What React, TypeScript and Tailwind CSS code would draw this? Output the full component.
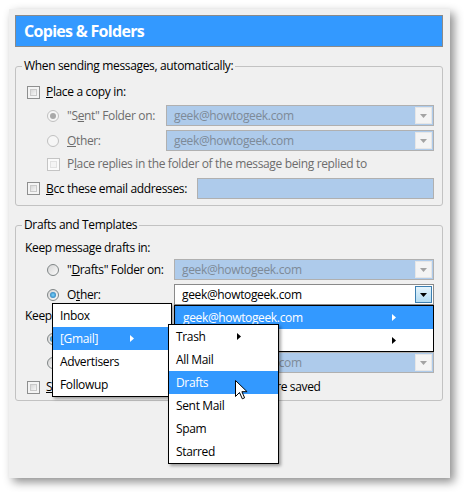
import React from "react"

const font = "font-['Open_Sans',sans-serif] tracking-[-0.35px]"

function RightArrow({ color = "#000" }: { color?: string }) {
  return (
    <svg width="4" height="7" viewBox="0 0 4 7">
      <path d="M0 0L4 3.5L0 7Z" fill={color} />
    </svg>
  )
}

function DownArrow({ color = "#000" }: { color?: string }) {
  return (
    <svg width="7" height="4" viewBox="0 0 7 4">
      <path d="M0 0H7L3.5 4Z" fill={color} />
    </svg>
  )
}

function Checkbox({ disabled = false }: { disabled?: boolean }) {
  return (
    <div
      className={
        "h-[13px] w-[13px] shrink-0 border p-[2px] " +
        (disabled ? "border-[#c4c4c4] bg-[#fafafa]" : "border-[#8e8f8f] bg-[#f4f4f4]")
      }
    >
      <div
        className={
          "h-full w-full border " +
          (disabled
            ? "border-[#e2e2e2] bg-[#f4f4f4]"
            : "border-[#c9c9c9] bg-linear-to-br from-[#d8d8d8] to-[#f7f7f7]")
        }
      />
    </div>
  )
}

function Radio({ checked = false, disabled = false }: { checked?: boolean; disabled?: boolean }) {
  return (
    <div
      className={
        "flex h-[12px] w-[12px] shrink-0 items-center justify-center rounded-full border " +
        (disabled ? "border-[#c0c0c0] bg-[#f6f6f6]" : "border-[#7f8586] bg-linear-to-br from-[#d6d6d6] to-[#fbfbfb]")
      }
    >
      {checked && (
        <div
          className={
            "h-[6px] w-[6px] rounded-full " +
            (disabled ? "bg-[#a9a9a9]" : "bg-radial from-[#7ad6ff] to-[#1a6aa8]")
          }
        />
      )}
    </div>
  )
}

function Combo({ w, disabled = true, active = false }: { w: string; disabled?: boolean; active?: boolean }) {
  return (
    <div
      className={
        "flex h-[21px] shrink-0 border p-[1px] " +
        w +
        " " +
        (disabled ? "border-[#b0b0b0] bg-[#aecbeb]" : "border-[#8a8a8a] bg-white")
      }
    >
      <div
        className={
          "flex flex-1 items-center pl-[6px] text-[12px] " +
          (disabled ? "text-[#7d8a98]" : "text-black")
        }
      >
        geek@howtogeek.com
      </div>
      <div
        className={
          "flex w-[17px] items-center justify-center border " +
          (active
            ? "border-[#3c7fb1] bg-linear-to-b from-[#e5f4fc] to-[#b3dcf3]"
            : "border-[#e6e6e6] bg-[#f4f4f4]")
        }
      >
        <DownArrow color={active ? "#000" : "#a3a3a3"} />
      </div>
    </div>
  )
}

function MenuItem({ label, active = false, arrow = false }: { label: string; active?: boolean; arrow?: boolean }) {
  return (
    <div
      className={
        "flex h-[23px] items-center justify-between pl-[7px] pr-[37px] " +
        (active ? "bg-[#3399ff] text-white" : "text-black")
      }
    >
      <span>{label}</span>
      {arrow && <RightArrow color={active ? "#fff" : "#000"} />}
    </div>
  )
}

export default function App() {
  return (
    <div className={"relative h-[492px] w-[464px] overflow-hidden bg-white pl-[9px] pt-[9px] text-[12px] " + font}>
      <div className="flex h-[469px] w-[441px] flex-col bg-[#f0f0f0] pl-[6px] pt-[6px] shadow-[4px_4px_9px_rgba(0,0,0,0.45)]">
        <div className="flex h-[32px] w-[428px] items-center border border-[#8a8a8a] bg-[#3399ff] pl-[8px] text-[16px] font-bold tracking-[-0.7px] text-white">
          Copies &amp; Folders
        </div>

        <fieldset className="mt-[11px] w-[428px] rounded-[3px] border border-[#c2c2c2] pb-[6px] text-black">
          <legend className="ml-[6px] px-[2px] leading-[16px]">When sending messages, automatically:</legend>
          <div className="mt-[8px] flex h-[20px] items-center pl-[11px]">
            <Checkbox />
            <span className="ml-[6px]">
              <u>P</u>lace a copy in:
            </span>
          </div>
          <div className="mt-[3px] flex h-[21px] items-center pl-[31px] text-[#6d6d6d]">
            <Radio checked disabled />
            <span className="ml-[8px] w-[99px]">
              "S<u>e</u>nt" Folder on:
            </span>
            <Combo w="w-[268px]" />
          </div>
          <div className="mt-[4px] flex h-[21px] items-center pl-[31px] text-[#6d6d6d]">
            <Radio disabled />
            <span className="ml-[8px] w-[99px]">
              <u>O</u>ther:
            </span>
            <Combo w="w-[268px]" />
          </div>
          <div className="mt-[3px] flex h-[20px] items-center pl-[31px] text-[#6d6d6d]">
            <Checkbox disabled />
            <span className="ml-[7px]">
              P<u>l</u>ace replies in the folder of the message being replied to
            </span>
          </div>
          <div className="mt-[4px] flex h-[21px] items-center pl-[11px]">
            <Checkbox />
            <span className="ml-[6px] w-[151px]">
              <u>B</u>cc these email addresses:
            </span>
            <div className="h-[21px] w-[237px] border border-[#b0b0b0] bg-[#aecbeb]" />
          </div>
        </fieldset>

        <fieldset className="mt-[11px] w-[428px] rounded-[3px] border border-[#c2c2c2] pb-[3px] text-black">
          <legend className="ml-[6px] px-[2px] leading-[16px]">Drafts and Templates</legend>
          <div className="mt-[5px] flex h-[20px] items-center pl-[9px]">Keep message drafts in:</div>
          <div className="mt-[1px] flex h-[21px] items-center pl-[31px]">
            <Radio />
            <span className="ml-[8px] w-[107px]">
              "<u>D</u>rafts" Folder on:
            </span>
            <Combo w="w-[260px]" />
          </div>
          <div className="mt-[4px] flex h-[21px] items-center pl-[31px]">
            <Radio checked />
            <span className="ml-[8px] w-[107px]">
              O<u>t</u>her:
            </span>
            <Combo w="w-[260px]" disabled={false} active />
          </div>
          <div className="mt-[1px] flex h-[20px] items-center pl-[9px]">Keep message templates in:</div>
          <div className="mt-[2px] flex h-[21px] items-center pl-[31px]">
            <Radio checked />
            <span className="ml-[8px] w-[107px]">"Templates" Folder on:</span>
            <Combo w="w-[260px]" />
          </div>
          <div className="mt-[3px] flex h-[21px] items-center pl-[31px]">
            <Radio />
            <span className="ml-[8px] w-[107px]">Other:</span>
            <Combo w="w-[260px]" />
          </div>
          <div className="mt-[4px] flex h-[20px] items-center pl-[11px]">
            <Checkbox />
            <span className="ml-[6px]">
              <u>S</u>how confirmation dialog when messages are saved
            </span>
          </div>
        </fieldset>
      </div>

      {/* dropdown list of the Other combo */}
      <div className="absolute left-[174px] top-[305px] w-[260px] border border-black bg-white">
        <div className="flex h-[23px] items-center justify-between bg-[#3399ff] pl-[8px] pr-[37px] text-white">
          <span>geek@howtogeek.com</span>
          <RightArrow color="#fff" />
        </div>
        <div className="flex h-[22px] items-center justify-end pr-[37px]">
          <RightArrow />
        </div>
      </div>

      {/* folder menu */}
      <div className="absolute left-[52px] top-[303px] w-[120px] border border-black bg-white shadow-[2px_2px_3px_rgba(0,0,0,0.35)]">
        <MenuItem label="Inbox" />
        <MenuItem label="[Gmail]" active arrow />
        <MenuItem label="Advertisers" />
        <MenuItem label="Followup" />
      </div>

      {/* [Gmail] submenu */}
      <div className="absolute left-[168px] top-[324px] w-[111px] border border-black bg-white shadow-[2px_2px_3px_rgba(0,0,0,0.35)]">
        <MenuItem label="Trash" arrow />
        <MenuItem label="All Mail" />
        <MenuItem label="Drafts" active />
        <MenuItem label="Sent Mail" />
        <MenuItem label="Spam" />
        <MenuItem label="Starred" />
      </div>

      {/* mouse pointer */}
      <svg className="absolute left-[235px] top-[380px]" width="13" height="20" viewBox="0 0 13 20">
        <path
          d="M0.5 0.5V16.5L4.5 12.5L7.3 18.8L9.6 17.8L6.9 11.7H12.1Z"
          fill="#fff"
          stroke="#000"
          strokeWidth="1"
          strokeLinejoin="round"
        />
      </svg>
    </div>
  )
}
